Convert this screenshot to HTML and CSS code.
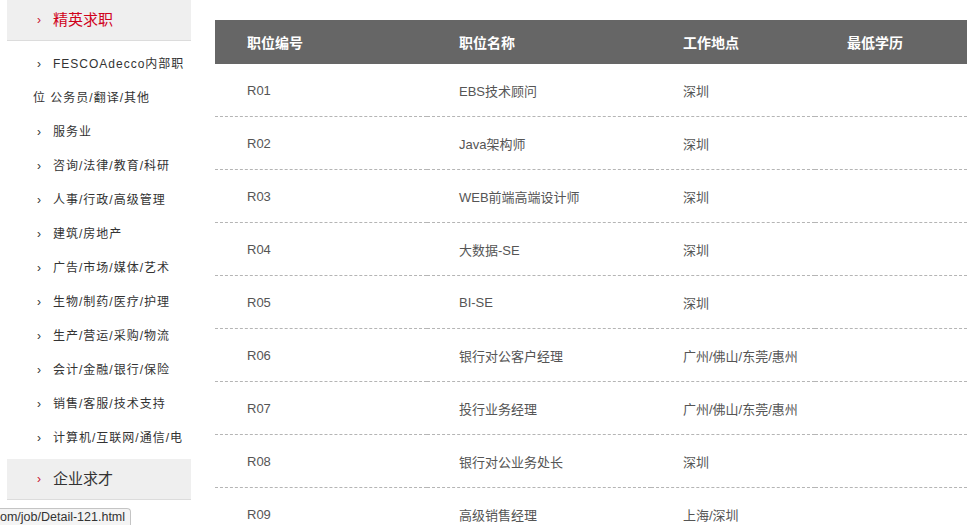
FILE: index.html
```html
<!DOCTYPE html>
<html lang="zh-CN">
<head>
<meta charset="utf-8">
<title>职位列表</title>
<link rel="stylesheet" href="styles.css">
</head>
<body>
<div class="page">
  <aside class="sidebar">
    <div class="cat-head active"><span class="arr">›</span>精英求职</div>
    <ul class="sub">
      <li><span class="arr">›</span>FESCOAdecco内部职位 公务员/翻译/其他</li>
      <li><span class="arr">›</span>服务业</li>
      <li><span class="arr">›</span>咨询/法律/教育/科研</li>
      <li><span class="arr">›</span>人事/行政/高级管理</li>
      <li><span class="arr">›</span>建筑/房地产</li>
      <li><span class="arr">›</span>广告/市场/媒体/艺术</li>
      <li><span class="arr">›</span>生物/制药/医疗/护理</li>
      <li><span class="arr">›</span>生产/营运/采购/物流</li>
      <li><span class="arr">›</span>会计/金融/银行/保险</li>
      <li><span class="arr">›</span>销售/客服/技术支持</li>
      <li class="nowrap"><span class="arr">›</span>计算机/互联网/通信/电</li>
    </ul>
    <div class="cat-head"><span class="arr">›</span>企业求才</div>
  </aside>
  <main class="main">
    <table class="jobs">
      <colgroup>
        <col class="c1"><col class="c2"><col class="c3"><col class="c4">
      </colgroup>
      <thead>
        <tr><th>职位编号</th><th>职位名称</th><th>工作地点</th><th>最低学历</th></tr>
      </thead>
      <tbody>
        <tr><td>R01</td><td>EBS技术顾问</td><td>深圳</td><td></td></tr>
        <tr><td>R02</td><td>Java架构师</td><td>深圳</td><td></td></tr>
        <tr><td>R03</td><td>WEB前端高端设计师</td><td>深圳</td><td></td></tr>
        <tr><td>R04</td><td>大数据-SE</td><td>深圳</td><td></td></tr>
        <tr><td>R05</td><td>BI-SE</td><td>深圳</td><td></td></tr>
        <tr><td>R06</td><td>银行对公客户经理</td><td>广州/佛山/东莞/惠州</td><td></td></tr>
        <tr><td>R07</td><td>投行业务经理</td><td>广州/佛山/东莞/惠州</td><td></td></tr>
        <tr><td>R08</td><td>银行对公业务处长</td><td>深圳</td><td></td></tr>
        <tr><td>R09</td><td>高级销售经理</td><td>上海/深圳</td><td></td></tr>
      </tbody>
    </table>
  </main>
</div>
<div class="status">om/job/Detail-121.html</div>
</body>
</html>
```

FILE: styles.css
```css
html, body {
  margin: 0;
  padding: 0;
  height: 525px;
  overflow: hidden;
  background: #fff;
}
body {
  font-family: "Liberation Sans", "Noto Sans CJK SC", sans-serif;
  color: #333;
}
.page {
  display: flex;
  align-items: flex-start;
}
.sidebar {
  width: 184px;
  margin-left: 7px;
  flex: none;
}
.cat-head {
  height: 40px;
  line-height: 40px;
  background: #efefef;
  border-bottom: 1px solid #dcdcdc;
  padding-left: 30px;
  font-size: 15px;
  color: #333;
  white-space: nowrap;
}
.cat-head .arr {
  display: inline-block;
  width: 16px;
  font-size: 12px;
  color: #c8102e;
  vertical-align: top;
}
.cat-head.active {
  color: #d0021b;
}
.sub {
  list-style: none;
  margin: 0;
  padding: 6px 0 4px 26px;
}
.sub li {
  font-size: 12px;
  line-height: 34px;
  color: #333;
  letter-spacing: 1px;
}
.sub li.nowrap {
  white-space: nowrap;
}
.sub .arr {
  display: inline-block;
  width: 16px;
  margin-left: 4px;
  letter-spacing: 0;
  color: #333;
}
.main {
  margin-left: 24px;
  padding-top: 20px;
  flex: none;
}
.jobs {
  width: 752px;
  border-collapse: collapse;
  table-layout: fixed;
}
.c1 { width: 212px; }
.c2 { width: 224px; }
.c3 { width: 164px; }
.c4 { width: 152px; }
.jobs th {
  height: 44px;
  padding: 0 0 0 32px;
  background: #666;
  color: #fff;
  font-size: 14px;
  font-weight: bold;
  text-align: left;
}
.jobs td {
  height: 52px;
  padding: 0 0 0 32px;
  font-size: 13px;
  color: #555;
  border-bottom: 1px dashed #b5b5b5;
  white-space: nowrap;
}
.status {
  position: absolute;
  left: 0;
  bottom: 0;
  height: 16px;
  line-height: 16px;
  padding: 0 5px 0 0;
  font-size: 12.5px;
  color: #333;
  background: #f4f4f4;
  border: 1px solid #c4c4c4;
  border-left: none;
  border-bottom: none;
  border-top-right-radius: 4px;
}
```
